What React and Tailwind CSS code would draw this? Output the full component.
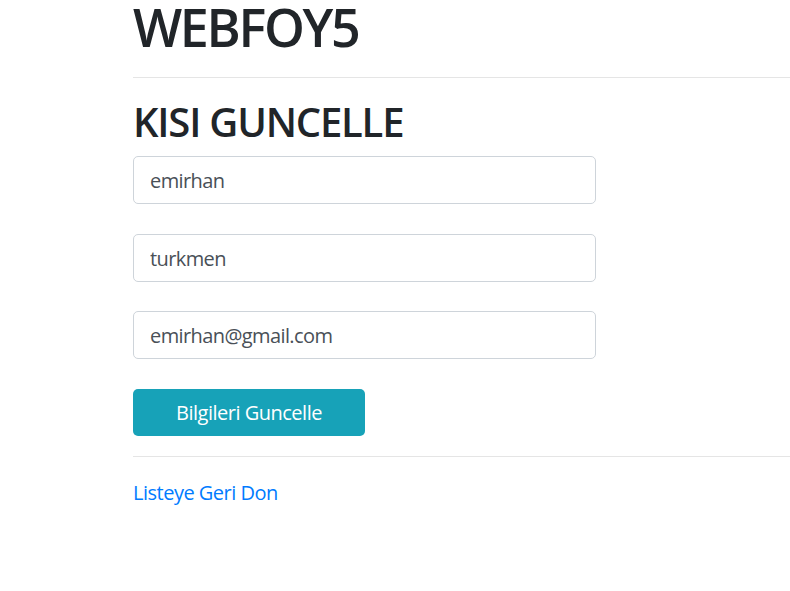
export default function App() {
  return (
    <div className="min-h-screen overflow-hidden bg-white pl-[133px] font-['Open_Sans',sans-serif] text-[#212529]">
      <h1 className="mt-[1px] text-[52px] font-semibold leading-none tracking-[-2.3px]">WEBFOY5</h1>
      <hr className="mt-[24px] border-t border-black/10" />
      <h2 className="mt-[20px] text-[40px] font-semibold leading-[1.2] tracking-[-1.2px]">KISI GUNCELLE</h2>
      <form className="mt-[10px] flex flex-col">
        <input
          defaultValue="emirhan"
          className="h-[48px] w-[463px] rounded-[5px] border border-[#ced4da] px-[16px] text-[20px] tracking-[-0.6px] text-[#495057] outline-none"
        />
        <input
          defaultValue="turkmen"
          className="mt-[30px] h-[48px] w-[463px] rounded-[5px] border border-[#ced4da] px-[16px] text-[20px] tracking-[-0.6px] text-[#495057] outline-none"
        />
        <input
          defaultValue="emirhan@gmail.com"
          className="mt-[29px] h-[48px] w-[463px] rounded-[5px] border border-[#ced4da] px-[16px] text-[20px] tracking-[-0.6px] text-[#495057] outline-none"
        />
        <button
          type="button"
          className="mt-[30px] h-[47px] w-[232px] rounded-[5px] bg-[#17a2b8] text-[20px] tracking-[-0.5px] text-white"
        >
          Bilgileri Guncelle
        </button>
      </form>
      <hr className="mt-[20px] border-t border-black/10" />
      <a href="#" className="mt-[21px] inline-block text-[20px] leading-[1.5] tracking-[-0.5px] text-[#007bff]">
        Listeye Geri Don
      </a>
    </div>
  );
}
